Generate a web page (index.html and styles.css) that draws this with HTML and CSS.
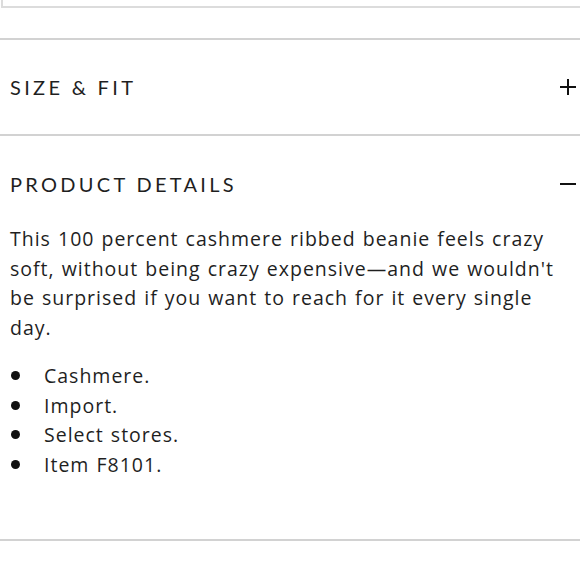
FILE: index.html
```html
<!DOCTYPE html>
<html>
<head>
<meta charset="utf-8">
<link rel="stylesheet" href="styles.css">
</head>
<body>
<div class="top-box"></div>
<section class="acc acc-closed">
  <div class="acc-head">
    <h2 class="acc-title">SIZE &amp; FIT</h2>
    <svg class="icon" width="16" height="16" viewBox="0 0 16 16"><path d="M8 0V16M0 8H16" stroke="#111" stroke-width="2" fill="none"/></svg>
  </div>
</section>
<section class="acc acc-open">
  <div class="acc-head open">
    <h2 class="acc-title">PRODUCT DETAILS</h2>
    <svg class="icon" width="16" height="16" viewBox="0 0 16 16"><path d="M0 8H16" stroke="#111" stroke-width="2" fill="none"/></svg>
  </div>
  <p class="desc">This 100 percent cashmere ribbed beanie feels crazy soft, without being crazy expensive—and we wouldn't be surprised if you want to reach for it every single day.</p>
  <ul class="bullets">
    <li>Cashmere.</li>
    <li>Import.</li>
    <li>Select stores.</li>
    <li>Item F8101.</li>
  </ul>
</section>
<div class="rule"></div>
</body>
</html>
```
FILE: styles.css
```css
html, body {
  margin: 0;
  padding: 0;
  background: #fff;
}
body {
  font-family: Lato, "Open Sans", sans-serif;
  color: #1f1f1f;
  width: 580px;
  overflow: hidden;
}
.top-box {
  margin-left: 1px;
  height: 6px;
  border-left: 2px solid #dcdcdc;
  border-bottom: 2px solid #dcdcdc;
  margin-bottom: 30px;
}
.acc {
  border-top: 2px solid #d2d2d2;
}
.acc-head {
  display: flex;
  justify-content: space-between;
  align-items: center;
  height: 94px;
  padding: 0 4px 0 10px;
}
.acc-head.open {
  padding-top: 36px;
  height: 24px;
}
.acc-title {
  margin: 0;
  font-weight: 400;
  font-size: 20px;
  line-height: 24px;
  letter-spacing: 3.3px;
}
.icon {
  display: block;
}
.desc {
  margin: 28px 0 0;
  padding: 0 4px 0 10px;
  font-family: "Open Sans", sans-serif;
  font-size: 19.5px;
  line-height: 29.5px;
  letter-spacing: 1px;
  word-spacing: 1px;
}
.bullets {
  margin: 19px 0 0;
  padding: 0 0 0 44px;
  font-family: "Open Sans", sans-serif;
  font-size: 19.5px;
  line-height: 29.5px;
  letter-spacing: 1px;
  word-spacing: 1px;
  list-style: none;
}
.bullets li {
  position: relative;
}
.bullets li::before {
  content: "";
  position: absolute;
  left: -33px;
  top: 10px;
  width: 9px;
  height: 9px;
  border-radius: 50%;
  background: #111;
}
.rule {
  margin-top: 60px;
  border-top: 2px solid #d2d2d2;
}
```
